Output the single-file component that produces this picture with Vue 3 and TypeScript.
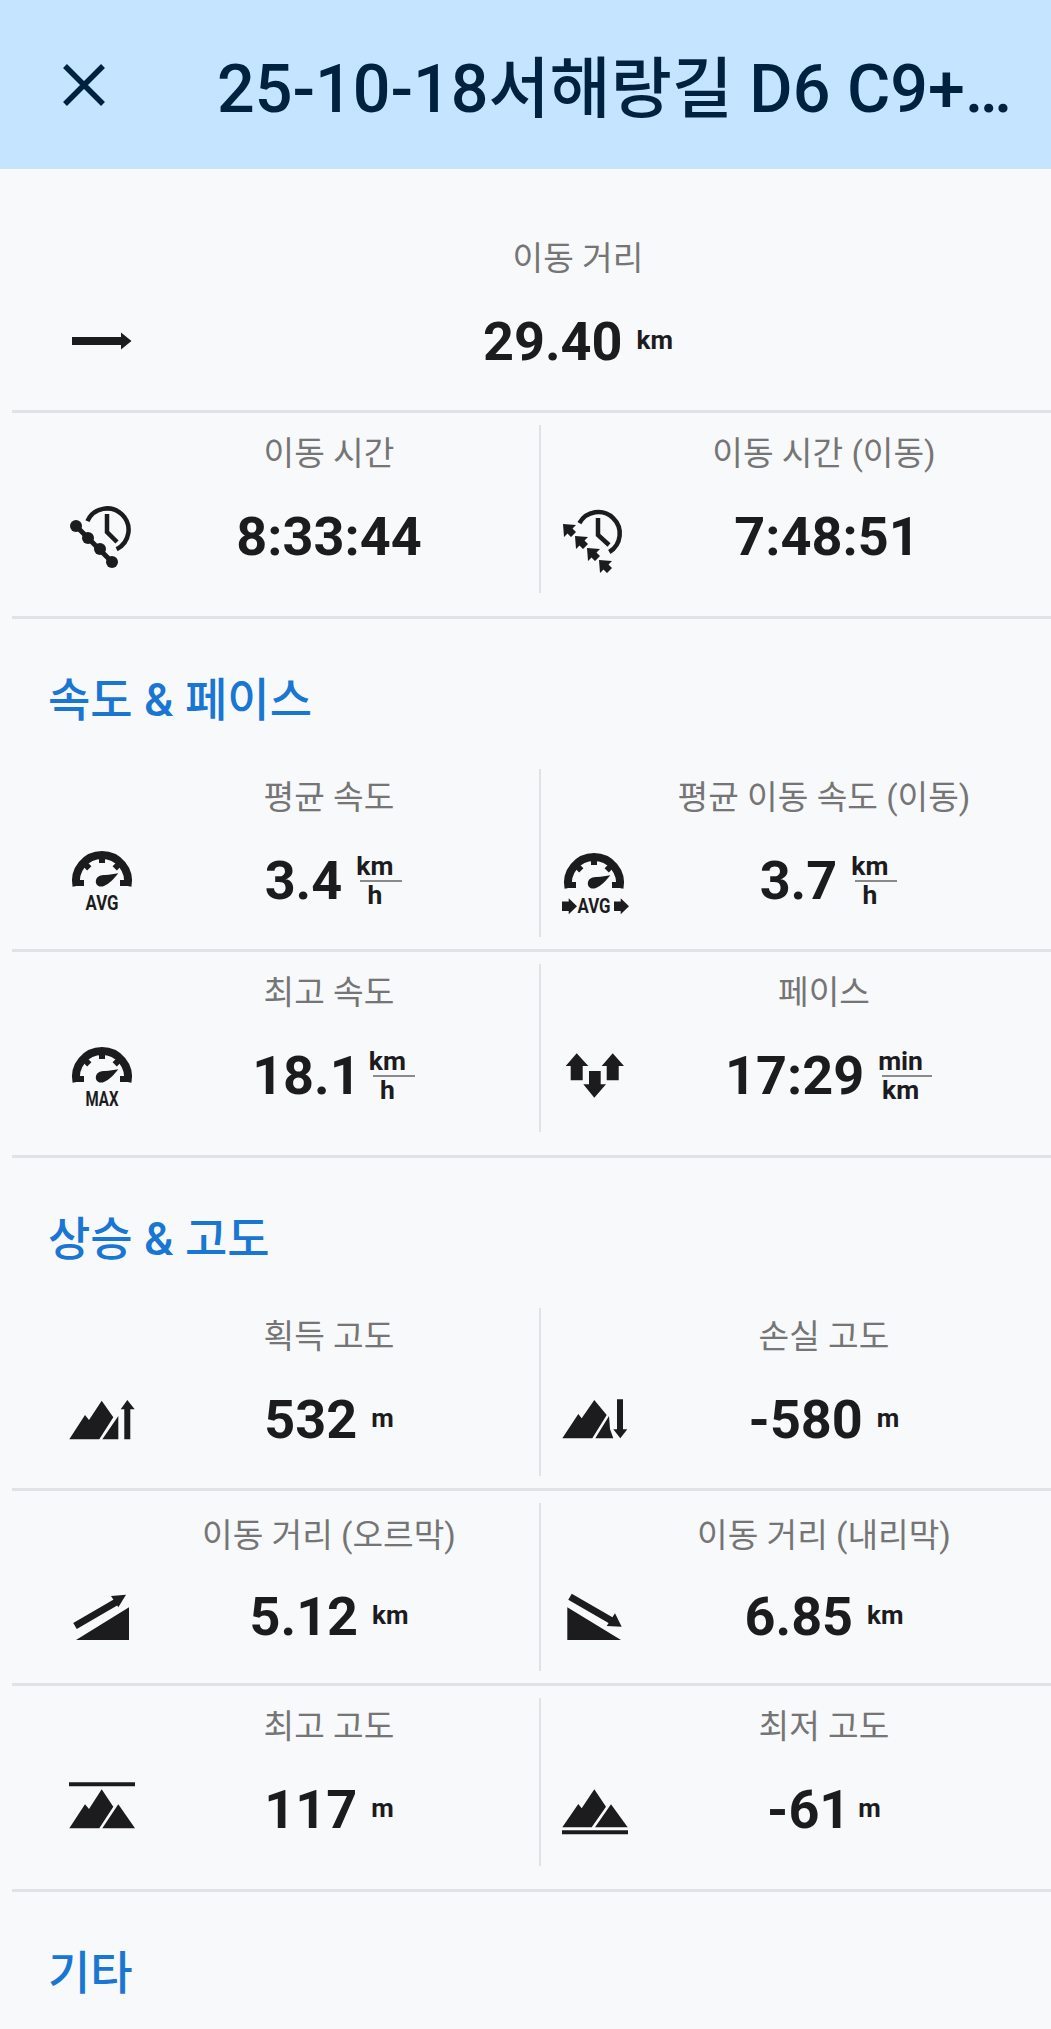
<template>
  <div class="page">
    <header class="top-bar">
      <button class="close-btn" aria-label="닫기">
        <svg width="42" height="42" viewBox="0 0 42 42">
          <path d="M2 2 L40 40 M40 2 L2 40" stroke="currentColor" stroke-width="5.5" fill="none" />
        </svg>
      </button>
      <h1 class="title">{{ title }}</h1>
    </header>

    <template v-for="(group, g) in groups" :key="g">
      <h2 v-if="group.heading" class="section-title">{{ group.heading }}</h2>
      <div
        v-for="(row, r) in group.rows"
        :key="r"
        class="row"
        :class="{ 'row-first': g === 0 && r === 0, 'row-last': r === group.rows.length - 1 }"
      >
        <div
          v-for="(stat, c) in row"
          :key="stat.label"
          class="stat"
          :class="{
            'stat-full': row.length === 1,
            'stat-right': c === 1,
            'stat-low': stat.low,
            'stat-tight': stat.tight,
            'stat-nudge': stat.nudge
          }"
        >
          <div class="stat-icon">
            <svg width="66" height="66" :viewBox="`0 ${-(stat.dy ?? 0)} 66 66`" class="icon">
              <g v-if="stat.icon === 'distance'">
                <path d="M4 29 H53 V24.5 L63.5 33 L53 41.5 V37 H4 Z" />
              </g>
              <g v-else-if="stat.icon === 'time'">
                <path d="M19.4 18.2 A21.5 21.5 0 1 1 48.6 46.2" class="line" stroke-width="4.5" />
                <path d="M39 11 V29 L49 39" class="line" stroke-width="4.5" />
                <path d="M8 23 L44 59" class="line" stroke-width="5" />
                <circle cx="8" cy="23" r="6" /><circle cx="20" cy="35" r="6" />
                <circle cx="32" cy="46" r="6" /><circle cx="44" cy="59" r="6" />
              </g>
              <g v-else-if="stat.icon === 'time-moving'">
                <path d="M17.4 20.2 A21.5 21.5 0 1 1 47.3 49" class="line" stroke-width="4.5" />
                <path d="M36 15 V32 L47 42" class="line" stroke-width="4.5" />
                <path
                  v-for="t in [[1, 21], [13, 33], [25, 45], [37, 57]]"
                  :key="t[0]"
                  :transform="`translate(${t[0]} ${t[1]})`"
                  d="M0 0 L13 1 L9.5 4.5 L13 8 L8 13 L4.5 9.5 L1 13 Z"
                />
              </g>
              <g v-else-if="stat.icon === 'gauge'">
                <path d="M8.5 38 A26 26 0 1 1 59.5 38" class="line" stroke-width="8" />
                <path
                  d="M9 35 H16 M15.6 14.6 L21.3 20.3 M34 7 V15 M52.4 14.6 L46.7 20.3 M59 35 H52"
                  class="line"
                  stroke-width="6"
                />
                <path d="M50.3 25.3 C46 31 41 36 36 38 C30 40 27 36 28 32 C29 28 33 27 37 27 C42 27 46 26 50.3 25.3 Z" />
                <text x="34" y="62" class="gauge-text" textLength="33" lengthAdjust="spacingAndGlyphs">{{ stat.gauge }}</text>
              </g>
              <g v-else-if="stat.icon === 'gauge-moving'">
                <path d="M6.5 40 A26 26 0 1 1 57.5 40" class="line" stroke-width="8" />
                <path
                  d="M7 37 H14 M13.6 16.6 L19.3 22.3 M32 9 V17 M50.4 16.6 L44.7 22.3 M57 37 H50"
                  class="line"
                  stroke-width="6"
                />
                <path d="M48.3 27.3 C44 33 39 38 34 40 C28 42 25 38 26 34 C27 30 31 29 35 29 C40 29 44 28 48.3 27.3 Z" />
                <text x="32" y="65" class="gauge-text" textLength="33" lengthAdjust="spacingAndGlyphs">AVG</text>
                <path d="M0 53.6 H6.7 V50.3 L15 58.3 L6.7 66.3 V63 H0 Z" />
                <path d="M52 53.6 H58.7 V50.3 L67 58.3 L58.7 66.3 V63 H52 Z" />
              </g>
              <g v-else-if="stat.icon === 'pace'">
                <path d="M14.7 9.3 L26.3 22 H20.7 V36.3 H8.7 V22 H3.7 Z" />
                <path d="M50.7 9.3 L62 22 H56.7 V36.3 H44.7 V22 H39.7 Z" />
                <path d="M27 27 H38.7 V40.3 H44 L32.3 53.7 L21.3 40.3 H27 Z" />
              </g>
              <g v-else-if="stat.icon === 'gain'">
                <path d="M1.3 52.3 L17 28 L21 33 L33.7 13.7 L45.3 30.3 L31.3 52.3 Z" />
                <path d="M50.3 29 V52.3 H34.3 Z" />
                <path d="M59.3 13 L66.7 22.3 H62.3 V52.3 H56.3 V22.3 H52.7 Z" />
              </g>
              <g v-else-if="stat.icon === 'loss'">
                <path d="M0.3 51.3 L16.3 27 L19.7 31.3 L32.3 13 L44.7 28 L30.3 51.3 Z" />
                <path d="M33.3 51.3 L47 29 L48 42 L51.3 51.3 Z" />
                <path d="M55 12.3 H61 V42.3 H65.3 L58.3 51.3 L51.3 42.3 H55 Z" />
              </g>
              <g v-else-if="stat.icon === 'uphill'">
                <path d="M8 55 H61 V22.3 Z" />
                <path d="M7 41 L50 16" class="line" stroke-width="7" />
                <path d="M58 9.7 L50.3 22.3 L43 11 Z" />
              </g>
              <g v-else-if="stat.icon === 'downhill'">
                <path d="M5.3 22.3 V55 H59 Z" />
                <path d="M8 11.7 L50 36" class="line" stroke-width="7" />
                <path d="M59.7 41.7 L44.7 41 L53 28.3 Z" />
              </g>
              <g v-else-if="stat.icon === 'highest'">
                <path d="M1 11.3 H67" class="line" stroke-width="4" />
                <path d="M1.3 55.3 L17 31.3 L21 36 L33.7 16.3 L45.3 33.7 L31.3 55.3 Z" />
                <path d="M50.3 31.3 L67 55.3 H34.3 Z" />
              </g>
              <g v-else-if="stat.icon === 'lowest'">
                <path d="M0.3 54.3 L16.3 31 L19.7 35.3 L32.3 16.3 L44 33.7 L29.7 54.3 Z" />
                <path d="M49 31.3 L65.7 54.3 H33 Z" />
                <path d="M0 59.3 H66" class="line" stroke-width="4" />
              </g>
            </svg>
          </div>
          <div class="stat-body">
            <div class="stat-label">{{ stat.label }}</div>
            <div class="stat-value">
              <span class="number">{{ stat.value }}</span>
              <span v-if="stat.unit" class="unit">{{ stat.unit }}</span>
              <span v-else-if="stat.over" class="unit-frac">
                <span>{{ stat.over }}</span>
                <span class="frac-line"></span>
                <span>{{ stat.under }}</span>
              </span>
            </div>
          </div>
        </div>
      </div>
    </template>

    <h2 class="section-title">기타</h2>
  </div>
</template>

<script setup lang="ts">
interface Stat {
  label: string
  value: string
  icon: string
  unit?: string
  over?: string
  under?: string
  gauge?: string
  dy?: number
  low?: boolean
  tight?: boolean
  nudge?: boolean
}

interface Group {
  heading?: string
  rows: Stat[][]
}

const title = '25-10-18서해랑길 D6 C9+…'

const groups: Group[] = [
  {
    rows: [
      [{ label: '이동 거리', value: '29.40', unit: 'km', icon: 'distance' }],
      [
        { label: '이동 시간', value: '8:33:44', icon: 'time' },
        { label: '이동 시간 (이동)', value: '7:48:51', icon: 'time-moving', nudge: true }
      ]
    ]
  },
  {
    heading: '속도 & 페이스',
    rows: [
      [
        { label: '평균 속도', value: '3.4', over: 'km', under: 'h', icon: 'gauge', gauge: 'AVG', dy: 1 },
        { label: '평균 이동 속도 (이동)', value: '3.7', over: 'km', under: 'h', icon: 'gauge-moving', dy: 1 }
      ],
      [
        { label: '최고 속도', value: '18.1', over: 'km', under: 'h', icon: 'gauge', gauge: 'MAX', dy: 2, tight: true },
        { label: '페이스', value: '17:29', over: 'min', under: 'km', icon: 'pace', dy: 2 }
      ]
    ]
  },
  {
    heading: '상승 & 고도',
    rows: [
      [
        { label: '획득 고도', value: '532', unit: 'm', icon: 'gain', dy: 1 },
        { label: '손실 고도', value: '-580', unit: 'm', icon: 'loss', dy: 1 }
      ],
      [
        { label: '이동 거리 (오르막)', value: '5.12', unit: 'km', icon: 'uphill', dy: 4, low: true },
        { label: '이동 거리 (내리막)', value: '6.85', unit: 'km', icon: 'downhill', dy: 4, low: true }
      ],
      [
        { label: '최고 고도', value: '117', unit: 'm', icon: 'highest', dy: -3 },
        { label: '최저 고도', value: '-61', unit: 'm', icon: 'lowest', dy: -3, tight: true }
      ]
    ]
  }
]
</script>

<style>
html,
body {
  margin: 0;
  background: #f8f9fb;
}
</style>

<style scoped>
.page {
  height: 2029px;
  overflow: hidden;
  background: #f8f9fb;
  font-family: Roboto, "Noto Sans CJK KR", sans-serif;
  color: #1c1c1e;
}

.top-bar {
  display: flex;
  align-items: center;
  height: 169px;
  background: #c5e4ff;
  color: #00213f;
}

.close-btn {
  display: flex;
  margin-left: 63px;
  padding: 0;
  border: none;
  background: none;
  color: inherit;
}

.title {
  margin: 0 0 4px 112px;
  font-size: 66.4px;
  font-weight: 500;
  white-space: nowrap;
}

.row {
  display: grid;
  grid-template-columns: 527px 1fr;
  margin-left: 12px;
  padding: 12px 0;
  border-bottom: 3px solid #e0e2e5;
}

.row-first {
  padding-top: 61px;
}

.row-last {
  padding-bottom: 23px;
}

.row-first.row-last {
  padding-bottom: 12px;
}

.stat {
  display: flex;
  height: 168px;
  box-sizing: border-box;
  padding: 0 15px 0 56px;
}

.stat-full {
  grid-column: 1 / -1;
  padding-right: 29px;
}

.stat-right {
  padding: 0 31px 0 21px;
  border-left: 2px solid #e0e2e5;
}

.stat-icon {
  flex: none;
  width: 66px;
  padding-top: 78px;
}

.icon {
  display: block;
  overflow: visible;
  fill: #1c1c1e;
}

.line {
  fill: none;
  stroke: #1c1c1e;
}

.gauge-text {
  font-size: 20px;
  font-weight: 700;
  text-anchor: middle;
}

.stat-body {
  flex: 1;
  display: flex;
  flex-direction: column;
  align-items: center;
}

.stat-low .stat-body {
  padding-top: 4px;
}

.stat-label {
  height: 54px;
  line-height: 58px;
  font-size: 33.3px;
  color: #757575;
  white-space: nowrap;
}

.stat-value {
  flex: 1;
  display: flex;
  align-items: center;
  gap: 14px;
}

.stat-tight .stat-value {
  gap: 8px;
}

.stat-nudge .stat-value {
  margin-left: 6px;
}

.number {
  font-size: 54px;
  font-weight: 700;
}

.unit {
  font-size: 26px;
  font-weight: 700;
  margin-bottom: 2px;
}

.unit-frac {
  display: flex;
  flex-direction: column;
  align-items: center;
  font-size: 26.5px;
  font-weight: 700;
  line-height: 28px;
}

.frac-line {
  align-self: stretch;
  height: 2px;
  margin: 0 -9px -1px 4px;
  background: #8a8a8a;
}

.section-title {
  margin: 0;
  padding: 51px 0 27px 48px;
  font-size: 46px;
  font-weight: 500;
  line-height: 60px;
  color: #1976d2;
}
</style>
